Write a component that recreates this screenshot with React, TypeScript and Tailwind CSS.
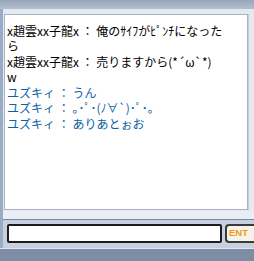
const lines = [
  { who: "x趙雲xx子龍x", text: ["俺のｻｲﾌがﾋﾟﾝﾁになった", "ら"], tone: "text-black" },
  { who: "x趙雲xx子龍x", text: ["売りますから(*´ω`*)", "w"], tone: "text-black" },
  { who: "ユズキィ", text: ["うん"], tone: "text-[#0b62a3]" },
  { who: "ユズキィ", text: ["｡･ﾟ･(ﾉ∀`)･ﾟ･｡"], tone: "text-[#0b62a3]" },
  { who: "ユズキィ", text: ["ありあとぉお"], tone: "text-[#0b62a3]" },
];

export default function App() {
  return (
    <div className="w-[254px] h-[261px] flex flex-col bg-[#dce2ec] overflow-hidden" style={{ fontFamily: '"Noto Sans CJK JP", "DejaVu Sans", sans-serif' }}>
      <div className="h-[9px] bg-gradient-to-b from-[#98a6bb] to-[#b3bfd0]" />
      <div className="flex-1 flex flex-col border-l-[3px] border-[#9aabc4] bg-[#e4e8ef]">
        <div className="flex pt-[5px] pl-[1px]">
          <div className="w-[244px] h-[196px] border border-[#a8b3c5] bg-white pl-[2px] pt-[8px] pr-[6px] overflow-hidden">
            {lines.map((l, i) => (
              <p key={i} className={`text-[12px] leading-[15.5px] ${l.tone}`}>
                {l.who} ： {l.text[0]}
                {l.text.slice(1).map((t, j) => (
                  <span key={j}>
                    <br />
                    {t}
                  </span>
                ))}
              </p>
            ))}
          </div>
          <div className="flex-1 bg-[#e9e8f1] border-l border-[#c9cdd9]" />
        </div>
        <div className="h-[8px] mt-[1px] bg-[#eceef3]" />
        <div className="h-[1px] bg-[#6e89ae]" />
        <div className="flex items-start gap-[3px] pt-[4px] pl-[4px] bg-[#c6d0de] h-[28px]">
          <div className="w-[223px] h-[19px] border-2 border-[#1c1c1c] rounded-[2px] bg-white" />
          <div className="w-[30px] h-[19px] border-2 border-r-0 border-[#3a3a3a] rounded-l-[4px] bg-[#f6f3ec] flex items-center pl-[2px]">
            <span className="text-[9.5px] font-bold leading-none text-[#f29a12]" style={{ fontFamily: '"Liberation Sans", sans-serif' }}>ENT</span>
          </div>
        </div>
      </div>
      <div className="h-[14px] border-t border-[#dfe5ee] bg-[#7e8da3]" />
    </div>
  );
}
